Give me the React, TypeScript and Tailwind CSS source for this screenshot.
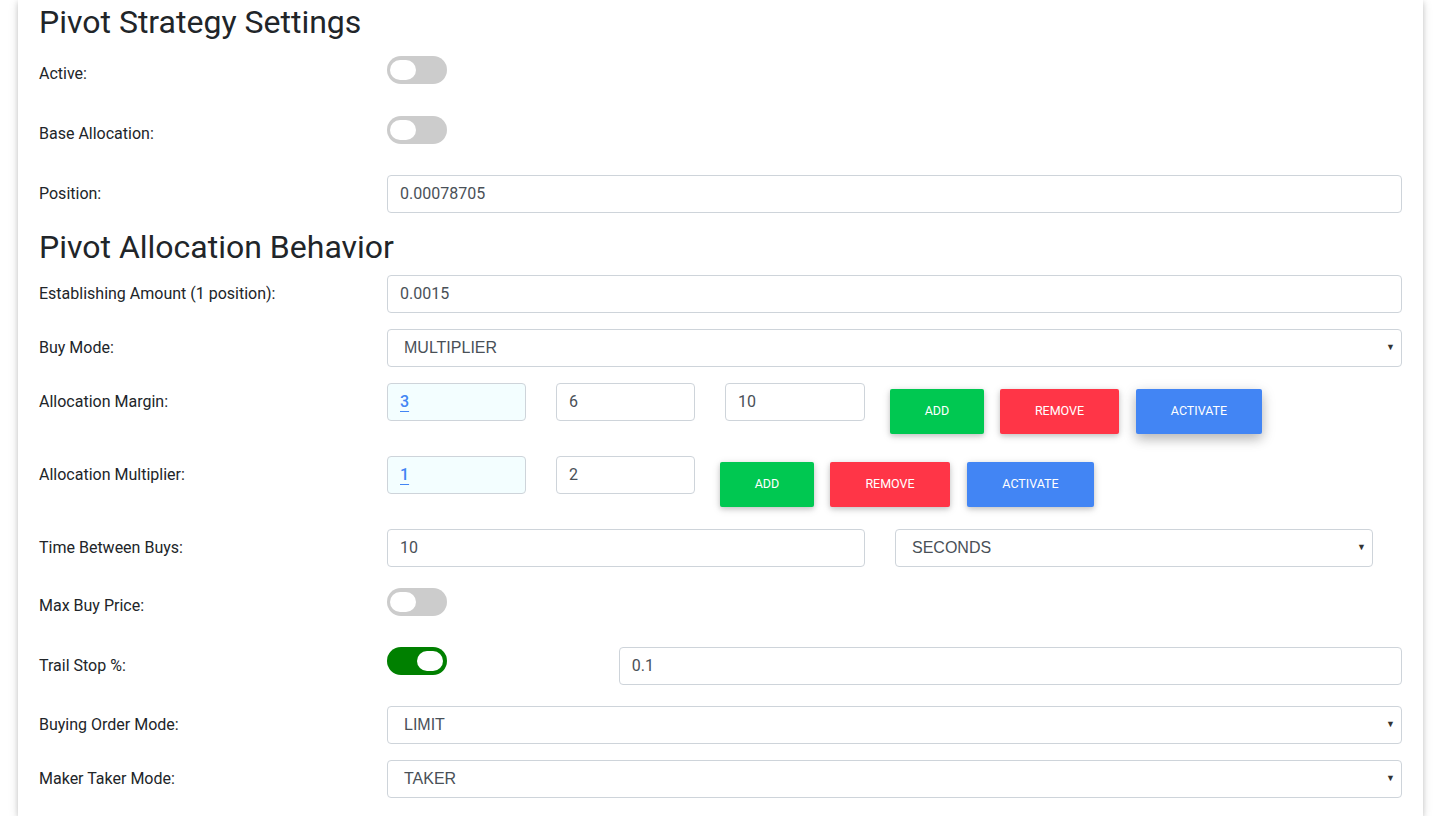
const font = "font-['Roboto','Liberation_Sans',sans-serif]"

function Toggle({ on = false }: { on?: boolean }) {
  return (
    <div
      className={`relative h-[28px] w-[60px] rounded-full ${on ? "bg-[#008000]" : "bg-[#cccccc]"}`}
    >
      <div
        className={`absolute top-[4px] h-[20px] w-[26px] rounded-full bg-white ${on ? "right-[4px]" : "left-[3px]"}`}
      />
    </div>
  )
}

function Field({
  value,
  className = "",
  highlight = false,
}: {
  value: string
  className?: string
  highlight?: boolean
}) {
  return (
    <div
      className={`flex h-[38px] items-center rounded-[4px] border border-[#ced4da] pl-[12px] text-[16px] ${
        highlight ? "bg-[#f3feff]" : "bg-white"
      } ${className}`}
    >
      {highlight ? (
        <span className="font-medium text-[#4285f4] underline underline-offset-[4px]">{value}</span>
      ) : (
        <span className="text-[#495057]">{value}</span>
      )}
    </div>
  )
}

function Select({ value, className = "" }: { value: string; className?: string }) {
  return (
    <div
      className={`flex h-[38px] items-center justify-between rounded-[4px] border border-[#ced4da] bg-white pl-[16px] pr-[6px] font-['Liberation_Sans',Arial,sans-serif] text-[16px] text-[#495057] ${className}`}
    >
      <span>{value}</span>
      <span className="text-[9px] text-[#333]">▼</span>
    </div>
  )
}

function Btn({ label, color, strong = false }: { label: string; color: string; strong?: boolean }) {
  return (
    <div
      className={`my-[6px] flex h-[45px] items-center justify-center rounded-[2px] text-[12.5px] text-white uppercase ${color} ${
        strong
          ? "shadow-[0_5px_11px_0_rgba(0,0,0,0.18),0_4px_15px_0_rgba(0,0,0,0.15)]"
          : "shadow-[0_2px_5px_0_rgba(0,0,0,0.16),0_2px_10px_0_rgba(0,0,0,0.12)]"
      }`}
    >
      {label}
    </div>
  )
}

function Label({ children, className = "" }: { children: React.ReactNode; className?: string }) {
  return (
    <div
      className={`flex h-[38px] w-[348px] shrink-0 items-center text-[16px] text-[#212529] ${className}`}
    >
      {children}
    </div>
  )
}

export default function App() {
  return (
    <div className={`min-h-[816px] bg-white ${font}`}>
      <div className="ml-[18px] h-[816px] w-[1405px] overflow-hidden bg-white px-[21px] shadow-[0_2px_5px_0_rgba(0,0,0,0.16),0_2px_10px_0_rgba(0,0,0,0.12)]">
        <h2 className="pt-[2px] text-[32px] leading-[40px] font-normal text-[#212529]">
          Pivot Strategy Settings
        </h2>

        <div className="mt-[9px] flex items-center">
          <Label className="pt-[7px]">Active:</Label>
          <Toggle />
        </div>

        <div className="mt-[22px] flex items-center">
          <Label className="pt-[7px]">Base Allocation:</Label>
          <Toggle />
        </div>

        <div className="mt-[26px] flex items-center">
          <Label>Position:</Label>
          <Field value="0.00078705" className="w-[1016px]" />
        </div>

        <h2 className="mt-[14px] text-[32px] leading-[40px] font-normal text-[#212529]">
          Pivot Allocation Behavior
        </h2>

        <div className="mt-[8px] flex items-center">
          <Label>Establishing Amount (1 position):</Label>
          <Field value="0.0015" className="w-[1016px]" />
        </div>

        <div className="mt-[16px] flex items-center">
          <Label>Buy Mode:</Label>
          <Select value="MULTIPLIER" className="w-[1016px]" />
        </div>

        <div className="mt-[16px] flex items-start">
          <Label>Allocation Margin:</Label>
          <div className="flex items-start">
            <Field value="3" highlight className="w-[139px]" />
            <Field value="6" className="ml-[30px] w-[139px]" />
            <Field value="10" className="ml-[30px] w-[140px]" />
            <div className="ml-[25px] flex gap-[16px]">
              <div className="w-[94px]">
                <Btn label="Add" color="bg-[#00c851]" />
              </div>
              <div className="w-[119px]">
                <Btn label="Remove" color="bg-[#ff3547]" />
              </div>
              <div className="ml-[1px] w-[126px]">
                <Btn label="Activate" color="bg-[#4285f4]" strong />
              </div>
            </div>
          </div>
        </div>

        <div className="mt-[16px] flex items-start">
          <Label>Allocation Multiplier:</Label>
          <div className="flex items-start">
            <Field value="1" highlight className="w-[139px]" />
            <Field value="2" className="ml-[30px] w-[139px]" />
            <div className="ml-[25px] flex gap-[16px]">
              <div className="w-[94px]">
                <Btn label="Add" color="bg-[#00c851]" />
              </div>
              <div className="w-[120px]">
                <Btn label="Remove" color="bg-[#ff3547]" />
              </div>
              <div className="ml-[1px] w-[127px]">
                <Btn label="Activate" color="bg-[#4285f4]" />
              </div>
            </div>
          </div>
        </div>

        <div className="mt-[16px] flex items-center">
          <Label>Time Between Buys:</Label>
          <Field value="10" className="w-[478px]" />
          <Select value="SECONDS" className="ml-[30px] w-[478px]" />
        </div>

        <div className="mt-[16px] flex h-[38px] items-center">
          <Label className="pt-[7px]">Max Buy Price:</Label>
          <Toggle />
        </div>

        <div className="mt-[26px] flex items-start">
          <Label>Trail Stop %:</Label>
          <div className="w-[232px]">
            <Toggle on />
          </div>
          <Field value="0.1" className="w-[784px]" />
        </div>

        <div className="mt-[21px] flex items-center">
          <Label>Buying Order Mode:</Label>
          <Select value="LIMIT" className="w-[1016px]" />
        </div>

        <div className="mt-[16px] flex items-center">
          <Label>Maker Taker Mode:</Label>
          <Select value="TAKER" className="w-[1016px]" />
        </div>
      </div>
    </div>
  )
}
